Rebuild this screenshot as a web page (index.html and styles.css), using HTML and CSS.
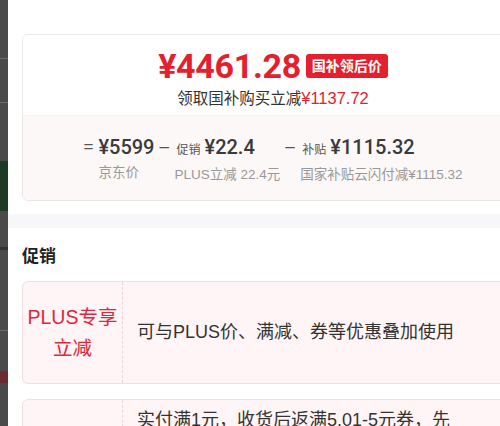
FILE: index.html
```html
<!DOCTYPE html>
<html lang="zh-CN">
  <head>
    <meta charset="UTF-8" />
    <meta name="viewport" content="width=device-width, initial-scale=1.0" />
    <title>促销</title>
    <link rel="stylesheet" href="styles.css">
  </head>
  <body>
    <div class="bagside">
      <div class="streg s1"></div>
      <div class="streg s2"></div>
      <div class="gron"></div>
      <div class="streg s3"></div>
      <div class="streg s4"></div>
      <div class="rod"></div>
    </div>

    <main class="ark">
      <section class="priskort">
        <div class="pris-top">
          <div class="pris-linje">
            <span class="stor-pris">¥4461.28</span>
            <span class="maerke">国补领后价</span>
          </div>
          <p class="under-linje">领取国补购买立减<span class="rod-tekst">¥1137.72</span></p>
        </div>

        <div class="pris-bund">
          <div class="gruppe">
            <span class="tegn">=</span>
            <div class="kolonne">
              <div class="belob">¥5599</div>
              <div class="etiket">京东价</div>
            </div>
          </div>
          <div class="gruppe">
            <span class="tegn">–</span>
            <div class="kolonne">
              <div class="belob"><small>促销</small>¥22.4</div>
              <div class="etiket">PLUS立减 22.4元</div>
            </div>
          </div>
          <div class="gruppe">
            <span class="tegn">–</span>
            <div class="kolonne">
              <div class="belob"><small>补贴</small>¥1115.32</div>
              <div class="etiket">国家补贴云闪付减¥1115.32</div>
            </div>
          </div>
        </div>
      </section>

      <div class="baand"></div>

      <h2>促销</h2>

      <article class="tilbud">
        <div class="tilbud-navn">PLUS专享<br />立减</div>
        <div class="tilbud-tekst">可与PLUS价、满减、券等优惠叠加使用</div>
      </article>

      <article class="tilbud">
        <div class="tilbud-navn"></div>
        <div class="tilbud-tekst top">实付满1元，收货后返满5.01-5元券，先</div>
      </article>
    </main>
  </body>
</html>
```

FILE: styles.css
```css
* {
  padding: 0;
  margin: 0;
  box-sizing: border-box;
}

body {
  display: flex;
  height: 426px;
  overflow: hidden;
  font-family: "Liberation Sans", "Noto Sans CJK SC", sans-serif;
  color: #333;
  background-color: #fff;
}

/* mørk kant til venstre */

.bagside {
  flex: 0 0 8px;
  background-color: #4a4a4a;
  padding-top: 58px;
}

.streg {
  height: 1px;
  background-color: #6a6a6a;
}

.s2 {
  margin-top: 43px;
}

.gron {
  margin-top: 58px;
  height: 50px;
  background-color: #1c3a24;
}

.s3 {
  margin-top: 36px;
  height: 3px;
  background-color: #333;
}

.s4 {
  margin-top: 80px;
}

.rod {
  margin-top: 40px;
  height: 12px;
  background-color: #6e2b2e;
}

/* selve arket */

.ark {
  flex: 0 0 540px;
  padding: 34px 0 0 14px;
}

.priskort {
  width: 502px;
  border: 1px solid #ece6e7;
  border-radius: 6px;
  overflow: hidden;
}

.pris-top {
  height: 80px;
  padding-top: 12px;
  text-align: center;
  background-color: #fff;
}

.pris-linje {
  display: flex;
  justify-content: center;
  align-items: center;
  height: 38px;
}

.stor-pris {
  font-family: Roboto, "Liberation Sans", sans-serif;
  font-weight: 700;
  font-size: 34px;
  color: #e5202e;
  letter-spacing: -0.3px;
}

.maerke {
  margin-left: 5px;
  height: 24px;
  line-height: 24px;
  padding: 0 6px;
  border-radius: 3px;
  background-color: #e5202e;
  color: #fff;
  font-size: 14px;
  font-weight: 700;
}

.under-linje {
  margin-top: 2px;
  font-size: 15.5px;
  line-height: 22px;
  color: #333;
}

.rod-tekst {
  font-size: 16.5px;
  color: #e5202e;
}

.pris-bund {
  height: 85px;
  padding-top: 18px;
  display: flex;
  justify-content: center;
  gap: 5px;
  background-color: #fcf8f8;
  border-top: 1px solid #f8f1f1;
}

.gruppe {
  display: flex;
}

.tegn {
  width: 15px;
  line-height: 26px;
  font-size: 17px;
  color: #555;
}

.belob {
  font-family: Roboto, "Liberation Sans", sans-serif;
  font-weight: 500;
  font-size: 20px;
  line-height: 26px;
  color: #3a3a3a;
  white-space: nowrap;
}

.belob small {
  font-family: "Noto Sans CJK SC", sans-serif;
  font-weight: 400;
  font-size: 12px;
  margin: 0 4px 0 2px;
  color: #555;
}

.etiket {
  margin-top: 3px;
  font-size: 13.5px;
  line-height: 20px;
  color: #999;
  white-space: nowrap;
}

.baand {
  margin: 13px 0 0 -14px;
  height: 14px;
  background-color: #f7f7fa;
}

h2 {
  margin-top: 17px;
  font-size: 17px;
  line-height: 24px;
  font-weight: 700;
  color: #222;
}

/* tilbud */

.tilbud {
  display: flex;
  width: 502px;
  margin-top: 12px;
  height: 103px;
  border: 1px solid #f3dfe3;
  border-radius: 6px;
  background-color: #fff5f6;
}

.tilbud + .tilbud {
  margin-top: 15px;
}

.tilbud-navn {
  flex: 0 0 100px;
  display: flex;
  align-items: center;
  justify-content: center;
  text-align: center;
  border-right: 1px dashed #efd3d8;
  font-size: 19.5px;
  line-height: 31px;
  color: #e1253a;
}

.tilbud-tekst {
  display: flex;
  align-items: center;
  padding-left: 14px;
  font-size: 18px;
  line-height: 27px;
  color: #333;
}

.tilbud-tekst.top {
  align-items: flex-start;
  padding-top: 7px;
}
```
